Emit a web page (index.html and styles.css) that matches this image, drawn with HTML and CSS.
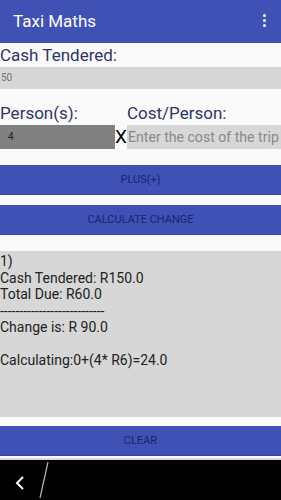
FILE: index.html
```html
<!DOCTYPE html>
<html lang="en">
<head>
    <meta charset="UTF-8">
    <meta name="viewport" content="width=device-width, initial-scale=1.0">
    <title>Taxi Maths</title>
    <link rel="stylesheet" href="styles.css">
</head>
<body>
    <div class="app-bar">
        <div class="app-title">Taxi Maths</div>
        <div class="menu-dots">
            <span></span><span></span><span></span>
        </div>
    </div>

    <div class="content">
        <div class="label">Cash Tendered:</div>
        <div class="field cash-field">50</div>

        <div class="person-row">
            <div class="col-person">
                <div class="label">Person(s):</div>
                <div class="field person-field">4</div>
            </div>
            <div class="times">X</div>
            <div class="col-cost">
                <div class="label">Cost/Person:</div>
                <div class="field cost-field">Enter the cost of the trip</div>
            </div>
        </div>

        <div class="button plus-button">PLUS(+)</div>
        <div class="button calc-button">CALCULATE CHANGE</div>

        <div class="output">1)
Cash Tendered: R150.0
Total Due: R60.0
---------------------------
Change is: R 90.0

Calculating:0+(4* R6)=24.0</div>

        <div class="button clear-button">CLEAR</div>
    </div>

    <div class="nav-bar">
        <svg class="back-icon" width="12" height="16" viewBox="0 0 12 16">
            <path d="M9 2 L3 8 L9 14" fill="none" stroke="#ffffff" stroke-width="2"/>
        </svg>
        <svg class="slash" width="12" height="38" viewBox="0 0 12 38">
            <line x1="10" y1="1" x2="2" y2="37" stroke="#bbbbbb" stroke-width="1.2"/>
        </svg>
    </div>
</body>
</html>
```

FILE: styles.css
```css
body {
    margin: 0;
    padding: 0;
    width: 281px;
    height: 500px;
    overflow: hidden;
    background-color: #fafafa;
    font-family: Roboto, "Noto Sans", sans-serif;
}
.app-bar {
    height: 43px;
    background-color: #3f51b5;
    display: flex;
    align-items: center;
    justify-content: space-between;
    padding: 0 15px 0 13px;
    box-sizing: border-box;
}
.app-title {
    color: #ffffff;
    font-size: 17px;
    margin-top: -1px;
}
.menu-dots {
    display: flex;
    flex-direction: column;
    gap: 2px;
    margin-top: -2px;
}
.menu-dots span {
    width: 3px;
    height: 3px;
    background-color: #ffffff;
    border-radius: 50%;
}
.content {
    height: 415px;
}
.label {
    height: 24px;
    line-height: 24px;
    font-size: 17px;
    color: #2e3568;
    white-space: nowrap;
}
.field {
    height: 22px;
    line-height: 22px;
    background-color: #d6d7d6;
    white-space: nowrap;
    overflow: hidden;
}
.cash-field {
    font-size: 10px;
    color: #757575;
    padding-left: 1px;
}
.person-row {
    display: flex;
    margin-top: 12px;
}
.col-person {
    width: 115px;
}
.col-cost {
    flex: 1;
    min-width: 0;
}
.person-field {
    height: 24px;
    line-height: 24px;
    background-color: #808080;
    font-size: 10px;
    color: #222222;
    padding-left: 8px;
}
.cost-field {
    height: 24px;
    line-height: 24px;
    font-size: 14.1px;
    color: #8a8a8a;
    padding-left: 1px;
}
.times {
    width: 12px;
    align-self: flex-end;
    height: 24px;
    line-height: 24px;
    font-size: 19px;
    color: #000000;
    text-align: center;
}
.button {
    height: 30px;
    line-height: 30px;
    background-color: #3f51b5;
    color: #1a2470;
    font-size: 11px;
    text-align: center;
    border-bottom: 1px solid #34449a;
    box-sizing: border-box;
}
.plus-button {
    margin-top: 16px;
}
.calc-button {
    margin-top: 10px;
}
.output {
    margin-top: 16px;
    height: 166px;
    background-color: #d6d7d6;
    font-size: 14px;
    line-height: 16.5px;
    color: #222222;
    white-space: pre;
    padding-top: 2px;
    box-sizing: border-box;
}
.clear-button {
    margin-top: 9px;
}
.nav-bar {
    height: 42px;
    background-color: #000000;
    border-top: 2px solid #d8d8e8;
    box-sizing: border-box;
    display: flex;
    align-items: center;
    padding-left: 14px;
    gap: 12px;
}
.back-icon {
    margin-top: 6px;
}
```
